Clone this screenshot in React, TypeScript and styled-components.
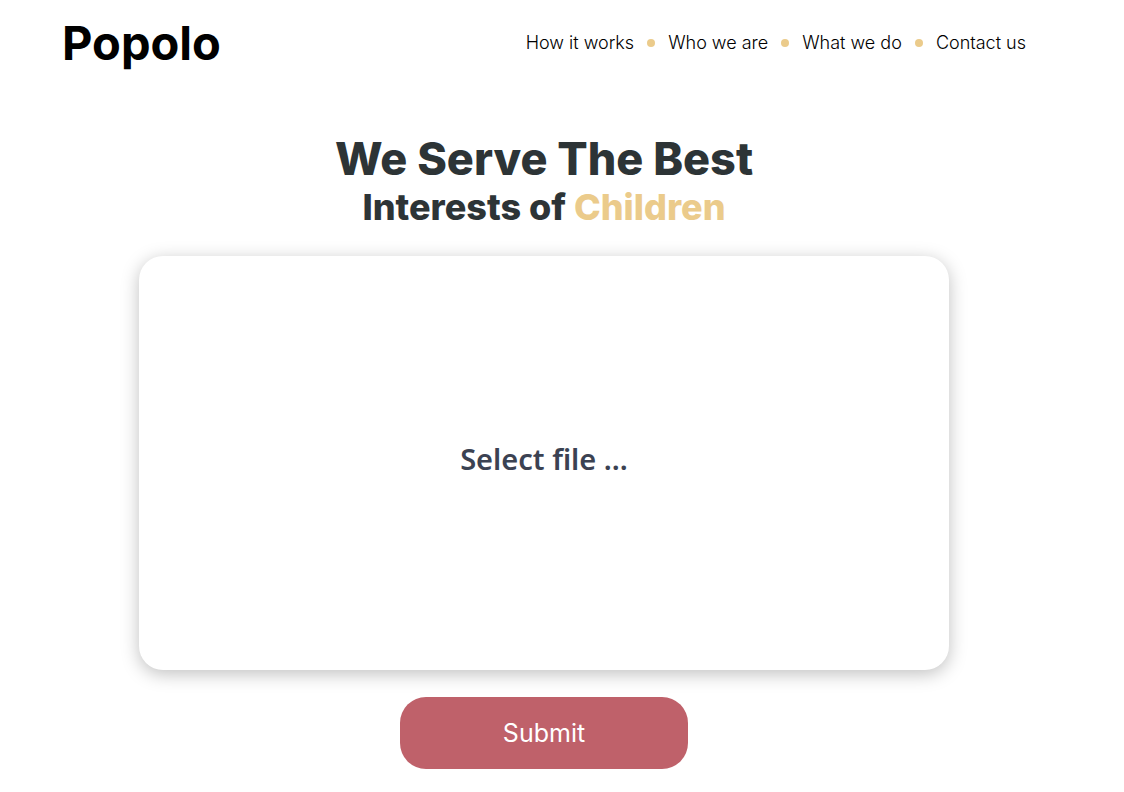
import React, { useState } from "react";
import styled, { createGlobalStyle } from "styled-components";

const GlobalStyle = createGlobalStyle`
  *, *::before, *::after { box-sizing: border-box; }
  body {
    margin: 0;
    background: #fff;
    color: #000;
    font-family: Inter, sans-serif;
  }
`;

const Page = styled.div`
  display: flex;
  flex-direction: column;
  padding: 0 98px 20px 62px;
`;

const Header = styled.header`
  display: flex;
  align-items: center;
  justify-content: space-between;
  height: 86px;
`;

const Logo = styled.a`
  color: #000;
  font-size: 47px;
  font-weight: 700;
  line-height: 56px;
  text-decoration: none;
`;

const NavList = styled.ul`
  display: flex;
  align-items: center;
  gap: 13px;
  margin: 0;
  padding: 0;
  list-style: none;
`;

const NavItem = styled.li`
  display: flex;
  align-items: center;
  gap: 13px;

  & + &::before {
    content: "";
    width: 8px;
    height: 8px;
    border-radius: 50%;
    background: #ebcb8b;
  }
`;

const NavLink = styled.a`
  color: #000;
  font-size: 18px;
  font-weight: 300;
  line-height: 24px;
  text-decoration: none;
`;

const Main = styled.main`
  display: flex;
  flex-direction: column;
  align-items: center;
  padding-top: 45px;
`;

const Title = styled.h1`
  display: flex;
  flex-direction: column;
  margin: 0;
  color: #2d3436;
  font-size: 45px;
  font-weight: 800;
  line-height: 56px;
  text-align: center;
`;

const Subtitle = styled.span`
  font-size: 36px;
  line-height: 40px;
`;

const Accent = styled.span`
  color: #ebcb8b;
`;

const UploadForm = styled.form`
  display: flex;
  flex-direction: column;
  align-items: center;
  gap: 27px;
  width: 100%;
  max-width: 810px;
  margin-top: 29px;
`;

const DropZone = styled.label`
  display: flex;
  align-items: center;
  justify-content: center;
  width: 100%;
  height: 414px;
  padding-bottom: 8px;
  border-radius: 24px;
  background: #fff;
  box-shadow: 0 4px 18px rgba(0, 0, 0, 0.25);
  color: #3b4252;
  font-family: "Noto Sans", sans-serif;
  font-size: 29px;
  font-weight: 600;
  line-height: 40px;
  cursor: pointer;
`;

const FileInput = styled.input`
  position: absolute;
  width: 1px;
  height: 1px;
  opacity: 0;
`;

const SubmitButton = styled.button`
  width: 288px;
  height: 72px;
  border: 0;
  border-radius: 26px;
  background: #bf616a;
  color: #fff;
  font-family: inherit;
  font-size: 25px;
  line-height: 32px;
  cursor: pointer;
`;

const links = ["How it works", "Who we are", "What we do", "Contact us"];

export default function App() {
  const [fileName, setFileName] = useState("");
  return (
    <Page>
      <GlobalStyle />
      <Header>
        <Logo href="#">Popolo</Logo>
        <nav>
          <NavList>
            {links.map((label) => (
              <NavItem key={label}>
                <NavLink href="#">{label}</NavLink>
              </NavItem>
            ))}
          </NavList>
        </nav>
      </Header>
      <Main>
        <Title>
          We Serve The Best
          <Subtitle>
            Interests of <Accent>Children</Accent>
          </Subtitle>
        </Title>
        <UploadForm onSubmit={(e) => e.preventDefault()}>
          <DropZone>
            {fileName || "Select file ..."}
            <FileInput
              type="file"
              onChange={(e) => setFileName(e.target.files?.[0]?.name ?? "")}
            />
          </DropZone>
          <SubmitButton type="submit">Submit</SubmitButton>
        </UploadForm>
      </Main>
    </Page>
  );
}
